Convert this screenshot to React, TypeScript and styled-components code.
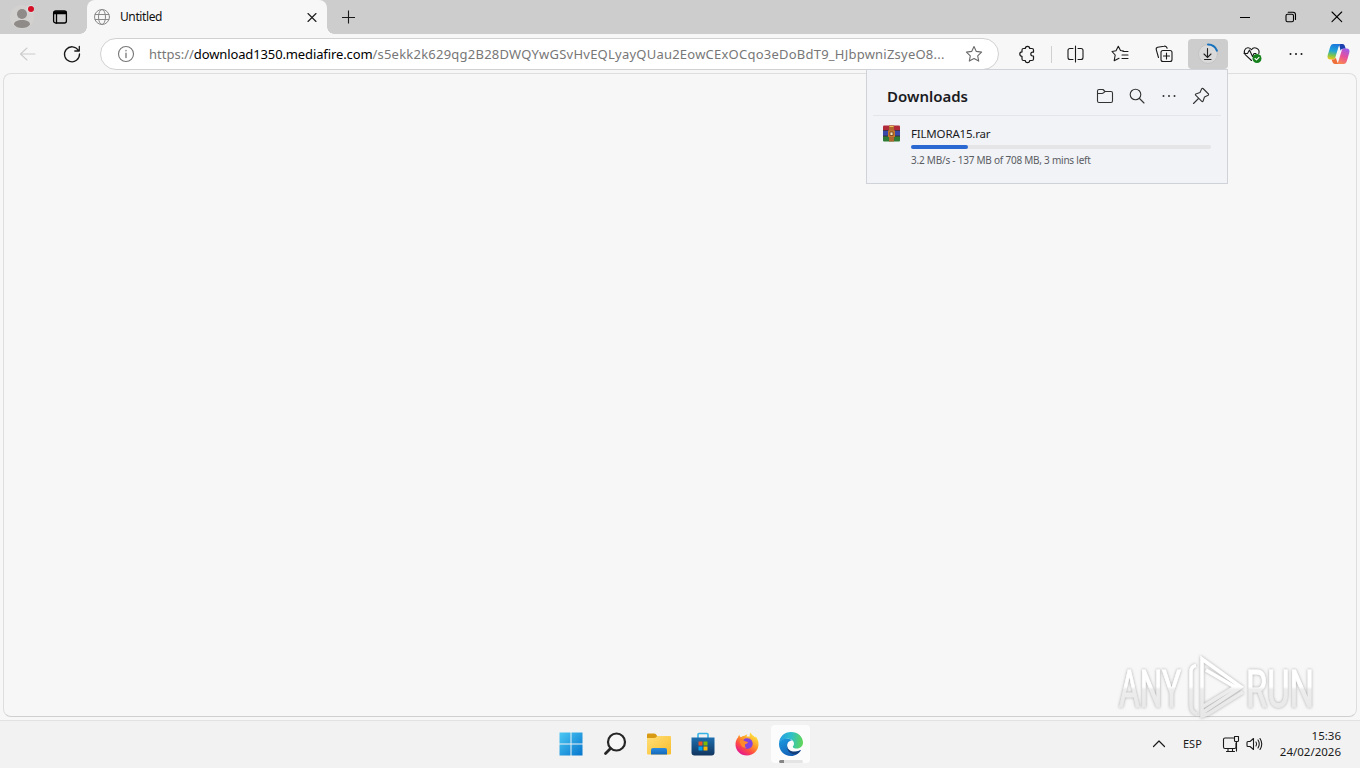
import React from 'react';
import styled, { createGlobalStyle } from 'styled-components';

const GlobalStyle = createGlobalStyle`
  * {
    box-sizing: border-box;
  }
  body {
    margin: 0;
    overflow: hidden;
    background: #f7f7f7;
    font-family: 'Noto Sans', 'Open Sans', sans-serif;
  }
  svg {
    display: block;
    flex: none;
  }
`

const Screen = styled.div`
  position: relative;
  display: flex;
  flex-direction: column;
  width: 1360px;
  height: 768px;
  overflow: hidden;
  background: #f7f7f7;
`

/* title bar */
const TitleBar = styled.div`
  display: flex;
  align-items: center;
  height: 34px;
  flex: none;
  background: #cdcdcd;
`
const TitleLeft = styled.div`
  display: flex;
  align-items: center;
  gap: 18px;
  width: 87px;
  padding-left: 10px;
`
const Tab = styled.div`
  position: relative;
  display: flex;
  align-items: center;
  width: 240px;
  height: 34px;
  padding: 0 8px 0 6px;
  background: #f7f7f7;
  border-radius: 8px 8px 0 0;

  &:before,
  &:after {
    content: '';
    position: absolute;
    bottom: 0;
    width: 7px;
    height: 7px;
  }
  &:before {
    left: -7px;
    background: radial-gradient(circle at 0 0, transparent 6.5px, #f7f7f7 7px);
  }
  &:after {
    right: -7px;
    background: radial-gradient(circle at 100% 0, transparent 6.5px, #f7f7f7 7px);
  }
`
const TabTitle = styled.div`
  flex: 1;
  margin-left: 9px;
  font-size: 12px;
  line-height: 16px;
  letter-spacing: -0.4px;
  color: #111;
`
const NewTab = styled.div`
  margin-left: 13px;
`
const WindowButtons = styled.div`
  display: flex;
  margin-left: auto;
`
const WindowButton = styled.button`
  display: flex;
  justify-content: center;
  align-items: center;
  width: 46px;
  height: 34px;
  padding: 0;
  border: none;
  background: transparent;
`

/* toolbar */
const Toolbar = styled.div`
  display: flex;
  align-items: center;
  height: 39px;
  flex: none;
  padding: 1px 2px 0 8px;
`
const ToolButton = styled.button<{ $active?: boolean }>`
  display: flex;
  justify-content: center;
  align-items: center;
  flex: none;
  width: 40px;
  height: 30px;
  margin-right: 4px;
  padding: 0;
  border: none;
  border-radius: 4px;
  background: ${({ $active }) => ($active ? '#cdcdcd' : 'transparent')};

  &:last-child {
    margin: 0 0 0 -2px;
  }
`
const AddressBar = styled.div`
  display: flex;
  align-items: center;
  width: 899px;
  height: 32px;
  margin: 0 8px 0 4px;
  padding: 0 15px 0 16px;
  border: 1px solid #d1d1d1;
  border-radius: 16px;
  background: #fff;
`
const Url = styled.div`
  display: flex;
  flex: 1;
  margin-left: 14px;
  font-size: 13px;
  line-height: 20px;
  white-space: nowrap;
  color: #777;
`
const Host = styled.span`
  color: #000;
  letter-spacing: -0.12px;
`
const Path = styled.span`
  letter-spacing: 0.23px;
`
const Separator = styled.div`
  width: 1px;
  height: 17px;
  margin-right: 4px;
  background: #d0d0d0;
`

/* page */
const PageFrame = styled.div`
  flex: none;
  height: 644px;
  margin: 0 3px 3px;
  border: 1px solid #dedede;
  border-bottom-color: #cfcfcf;
  border-radius: 8px;
  background: #f7f7f7;
`

/* downloads flyout */
const Flyout = styled.div`
  position: absolute;
  top: 69px;
  left: 866px;
  width: 362px;
  height: 115px;
  border: 1px solid #d0d2da;
  background: #f1f3f7;
`
const FlyoutHeader = styled.div`
  display: flex;
  align-items: center;
  height: 46px;
  margin: 0 6px;
  padding: 6px 10px 0 14px;
  border-bottom: 1px solid #e3e5ea;
`
const FlyoutTitle = styled.div`
  flex: 1;
  font-size: 15px;
  font-weight: 600;
  line-height: 20px;
  color: #1b1b1f;
`
const FlyoutActions = styled.div`
  display: flex;
  gap: 12px;
`
const DownloadItem = styled.div`
  display: flex;
  gap: 11px;
  padding: 9px 16px 0;
`
const DownloadBody = styled.div`
  flex: 1;
`
const FileName = styled.div`
  font-size: 11.5px;
  line-height: 18px;
  height: 20px;
  color: #1b1b1f;
  letter-spacing: -0.18px;
`
const ProgressTrack = styled.div`
  height: 4px;
  border-radius: 2px;
  background: #e5e5e8;
`
const ProgressFill = styled.div`
  height: 4px;
  border-radius: 2px;
  background: #2a69d2;
`
const DownloadStatus = styled.div`
  margin-top: 3px;
  font-size: 10px;
  line-height: 16px;
  letter-spacing: -0.23px;
  color: #5a5c62;
`

/* watermark */
const Watermark = styled.div`
  position: absolute;
  top: 654px;
  left: 1114px;
`

/* taskbar */
const Taskbar = styled.div`
  display: flex;
  align-items: center;
  flex: none;
  height: 48px;
  padding: 0 0 2px 549px;
  border-top: 1px solid #e2e2e2;
  background: #f2f2f2;
`
const TaskButton = styled.div<{ $active?: boolean }>`
  position: relative;
  display: flex;
  justify-content: center;
  align-items: center;
  width: 39px;
  height: 38px;
  margin: 0 3px 0 2px;
  border-radius: 4px;
  background: ${({ $active }) => ($active ? '#fcfcfc' : 'transparent')};
`
const Indicator = styled.div`
  position: absolute;
  left: 8px;
  bottom: 0;
  width: 24px;
  height: 3px;
  border-radius: 2px;
  background: linear-gradient(to right, #858585 5px, #e4e4e4 5px);
`
const Tray = styled.div`
  display: flex;
  align-items: center;
  margin-left: auto;
  padding-right: 19px;
`
const Language = styled.div`
  width: 20px;
  margin: 0 19px 0 17px;
  font-size: 11px;
  line-height: 16px;
  color: #1a1a1a;
`
const Volume = styled.div`
  margin: 0 -3px 0 3px;
`
const Clock = styled.div`
  width: 70px;
  margin-left: 7px;
  font-size: 11.5px;
  line-height: 16px;
  text-align: right;
  color: #1a1a1a;
  white-space: nowrap;
`

type IconProps = { size?: number; color?: string; stroke?: number; children: React.ReactNode };

const Icon: React.FC<IconProps> = ({ size = 20, color = '#1a1a1a', stroke = 1.1, children }) => (
  <svg width={size} height={size} viewBox={`0 0 ${size} ${size}`} fill="none" stroke={color} strokeWidth={stroke} strokeLinecap="round" strokeLinejoin="round">
    {children}
  </svg>
);

const ProfileIcon = () => (
  <svg width="24" height="24" viewBox="0 0 24 24">
    <circle cx="12" cy="12" r="12" fill="#d3d1cf" />
    <circle cx="12" cy="9" r="5" fill="#8f8b88" />
    <path d="M4 19.5c0-3 3.5-4.5 8-4.5s8 1.500 8 4.500c-1.500 2.500-4.500 3.500-8 3.500s-6.500-1-8-3.500z" fill="#8f8b88" />
    <circle cx="21" cy="4" r="4" fill="#dedcdc" />
    <circle cx="21" cy="4" r="3" fill="#d50f25" />
  </svg>
);

const StoreIcon = () => (
  <svg width="24" height="24" viewBox="0 0 24 24">
    <defs>
      <linearGradient id="store" x1="0" y1="0" x2="0" y2="1">
        <stop offset="0" stopColor="#1c6fb0" />
        <stop offset="1" stopColor="#12355f" />
      </linearGradient>
    </defs>
    <path d="M7 6V2.500q0-1 1-1h8q1 0 1 1V6" fill="none" stroke="#35b3e6" strokeWidth="1.600" />
    <path d="M.5 5.500h23v15q0 3-3 3h-17q-3 0-3-3z" fill="url(#store)" />
    <path d="M7.500 9.500h4v4h-4z" fill="#f25022" />
    <path d="M12.500 9.500h4v4h-4z" fill="#7fba00" />
    <path d="M7.500 14.500h4v4h-4z" fill="#00a4ef" />
    <path d="M12.500 14.500h4v4h-4z" fill="#ffb900" />
  </svg>
);

const ExplorerIcon = () => (
  <svg width="26" height="24" viewBox="0 0 26 24">
    <defs>
      <linearGradient id="folder" x1="0" y1="0" x2="1" y2="1">
        <stop offset="0" stopColor="#ffdf78" />
        <stop offset="1" stopColor="#f8bd2c" />
      </linearGradient>
      <linearGradient id="folderBase" x1="0" y1="0" x2="0" y2="1">
        <stop offset="0" stopColor="#2a8be0" />
        <stop offset="1" stopColor="#1568b8" />
      </linearGradient>
    </defs>
    <path d="M1 7V2.500q0-1 1-1h6.500q.7 0 1.200.6L12 5v3z" fill="#d99a13" />
    <path d="M1 6h8l2.500-2H24q1 0 1 1v16.500q0 1-1 1H2q-1 0-1-1z" fill="url(#folder)" />
    <path d="M5 22.500V18q0-2 2-2h12q2 0 2 2v4.500z" fill="url(#folderBase)" />
  </svg>
);

const FirefoxIcon = () => (
  <svg width="24" height="24" viewBox="0 0 24 24">
    <defs>
      <linearGradient id="fox" x1=".85" y1=".1" x2=".25" y2=".95">
        <stop offset="0" stopColor="#ffe642" />
        <stop offset=".4" stopColor="#ff9a26" />
        <stop offset=".7" stopColor="#ff4a45" />
        <stop offset="1" stopColor="#e3188e" />
      </linearGradient>
    </defs>
    <path d="M3 5.500c.2-1.200.7-2 1.300-2.500.2 1 .7 1.700 1.500 2.200C7 4.300 8 4 9 4c1-.9 2.500-1.500 3.500-1.500-.7.700-1 1.300-1 2h3.300C14.500 3 14.700 1.500 15.700.6c.6 2.200 3 3.400 4.500 4.900.3 0 .4-.5.300-1.200 2 2 3 5 3 8C23.500 18.700 18.500 23.500 12 23.500S.5 18.700.5 12.500c0-3 1-5.500 2.500-7z" fill="url(#fox)" />
    <path d="M8 8.500c1-2 3-2.500 4.500-2.300 3.500.3 5.200 2.800 5.200 5.600 0 2.800-2.300 5-5.200 5s-5-2-5-4.500z" fill="#8243e0" />
    <path d="M4.500 8.500c2-1 4-.8 5.500.7l3 .8c0 1.300-1.500 1.600-3 2.400-.3 1.800.5 2.800 1.500 3.200-2.500.8-6-.8-7-7.100z" fill="#ff8a2c" />
  </svg>
);

const EdgeIcon = () => (
  <svg width="24" height="24" viewBox="0 0 24 24">
    <defs>
      <linearGradient id="edgeTop" x1="0" y1=".4" x2="1" y2=".5">
        <stop offset="0" stopColor="#269de4" />
        <stop offset=".5" stopColor="#2fc1c8" />
        <stop offset="1" stopColor="#61d655" />
      </linearGradient>
      <linearGradient id="edgeSide" x1="0" y1="0" x2=".7" y2="1">
        <stop offset="0" stopColor="#1c9de2" />
        <stop offset="1" stopColor="#1258b0" />
      </linearGradient>
    </defs>
    <path d="M0 11C.5 4.500 5.500 0 12 0c7 0 12 4.800 12 10.500 0 3.500-2.700 6-6.200 6-2.500 0-4-.8-4-1.800 0-.7 1.200-1.300 1.200-3C15 9 12.500 6.800 8.500 6.800 4.500 6.800 1.200 8.500 0 11z" fill="url(#edgeTop)" />
    <path d="M0 12c0-3.200 3.500-5.300 8.500-5.200 2 .1 3.500.7 4.500 1.700-3 0-4.800 2.300-4.800 5.200 0 5.300 5.500 8 11 5.300l2.800-1C20 21.600 16.500 24 12 24 5 24 0 18.500 0 12z" fill="url(#edgeSide)" />
    <path d="M8.200 13.700C7.500 19.500 12.500 23 17.500 22.200c2-1 3.500-2.500 4.500-4.200-6.500 3-13.500 1.500-13.800-4.300z" fill="#123f7c" />
  </svg>
);

const CopilotIcon = () => (
  <svg width="23" height="22" viewBox="0 0 23 22">
    <defs>
      <linearGradient id="copLeft" x1=".5" y1="0" x2=".35" y2="1">
        <stop offset="0" stopColor="#1a78dc" />
        <stop offset=".45" stopColor="#20a6d8" />
        <stop offset=".75" stopColor="#7fc64c" />
        <stop offset="1" stopColor="#f0c51d" />
      </linearGradient>
      <linearGradient id="copRight" x1=".7" y1="0" x2=".3" y2="1">
        <stop offset="0" stopColor="#a05be8" />
        <stop offset=".5" stopColor="#e8509a" />
        <stop offset="1" stopColor="#fb8a4c" />
      </linearGradient>
    </defs>
    <path d="M12 1h3.500c1.500 0 2 1 2.500 2.500l.7 2.300H16c-1.300 0-2 .7-2.400 2z" fill="#1b3fae" />
    <path d="M6.500 1H14c-1.500.3-2 1.500-2.500 3L8.300 14.500C7.800 16 7 16.500 5.500 16.500H3.300C1 16.500 0 14.700.7 12.200L3 4.500C3.700 2 4.700 1 6.500 1z" fill="url(#copLeft)" />
    <path d="M16.500 21H9c1.500-.3 2-1.500 2.500-3l3.200-10.500c.5-1.500 1.300-2 2.800-2h2.200c2.300 0 3.300 1.800 2.600 4.300L20 17.500c-.7 2.500-1.700 3.500-3.500 3.500z" fill="url(#copRight)" />
    <path d="M11 21H8c-1.500 0-2.200-1-2.700-2.500l-.7-2h1.700c1.300 0 2-.7 2.400-2z" fill="#ef6f3a" />
  </svg>
);

const RarIcon = () => (
  <svg width="17" height="17" viewBox="0 0 17 17">
    <path d="M0 1.500Q0 .5 1 .5h15q1 0 1 1v4H0z" fill="#b02a3a" />
    <path d="M0 5.500h17v5.500H0z" fill="#3a48a8" />
    <path d="M0 11h17v4.500q0 1-1 1H1q-1 0-1-1z" fill="#2f7a35" />
    <path d="M0 5.500h17M0 11h17" stroke="#352733" strokeWidth=".8" />
    <path d="M6 .5h5v16H6z" fill="#b0672f" />
    <path d="M5 5.500h7v6.500H5z" fill="#c9762d" />
    <path d="M7 7h3v3.500H7z" fill="#f4e4b8" stroke="#6b3a1a" strokeWidth=".8" />
    <path d="M6.500 1.500h4" stroke="#f0c05a" />
  </svg>
);

const WatermarkArt = () => (
  <svg width="220" height="72" viewBox="0 0 220 72" fill="none" overflow="visible">
    <defs>
      <linearGradient id="mark" x1="0" y1="0" x2="0" y2="68" gradientUnits="userSpaceOnUse">
        <stop offset="0" stopColor="#ffffff" />
        <stop offset=".48" stopColor="#ffffff" />
        <stop offset=".52" stopColor="#ededed" />
        <stop offset="1" stopColor="#e6e6e6" />
      </linearGradient>
      <filter id="shade" x="-10%" y="-10%" width="120%" height="120%">
        <feDropShadow dx="0" dy="0" stdDeviation="1.600" floodColor="#8c8c8c" floodOpacity=".75" />
      </filter>
    </defs>
    <g filter="url(#shade)">
      <g fill="url(#mark)" stroke="url(#mark)" strokeWidth=".9" fontFamily="Roboto, sans-serif" fontSize="51">
        <text x="5" y="53" textLength="62" lengthAdjust="spacingAndGlyphs">ANY</text>
        <text x="132" y="53" textLength="68" lengthAdjust="spacingAndGlyphs">RUN</text>
      </g>
      <path d="M82 11.500q-5 1-5 6v34q0 7 6 8.500" stroke="url(#mark)" strokeWidth="3.500" />
      <path d="M88 5v54l39-26zM88 5v57l6-2 35-22M92 16l29 17-33 20" stroke="url(#mark)" strokeWidth="3.500" />
    </g>
  </svg>
);

const App: React.FC = () => {
  const downloaded = 137;
  const total = 708;

  return (
    <Screen>
      <GlobalStyle />
      <TitleBar>
        <TitleLeft>
          <ProfileIcon />
          <Icon size={16} stroke={1.3} color="#000">
            <rect x="1.600" y="2" width="12.800" height="12" rx="2" />
            <path d="M2 3h12v1.500H2z" fill="#000" />
            <path d="M4.500 5v9" />
          </Icon>
        </TitleLeft>
        <Tab>
          <Icon size={18} stroke={1} color="#8a8a8a">
            <circle cx="9" cy="9" r="7.500" />
            <ellipse cx="9" cy="9" rx="3.500" ry="7.500" />
            <path d="M2.200 6.500h13.600M2.200 11.500h13.600" />
          </Icon>
          <TabTitle>Untitled</TabTitle>
          <Icon size={14}>
            <path d="M3 3.500l8 8M11 3.500l-8 8" />
          </Icon>
        </Tab>
        <NewTab>
          <Icon size={16} stroke={1.1}>
            <path d="M8.500 1.500v13M2 8.500h13" strokeLinecap="butt" />
          </Icon>
        </NewTab>
        <WindowButtons>
          <WindowButton>
            <Icon size={12} stroke={1} color="#000"><path d="M1 6.500h10" strokeLinecap="butt" /></Icon>
          </WindowButton>
          <WindowButton>
            <Icon size={12} stroke={1.1} color="#000">
              <rect x="1" y="3.200" width="7.500" height="7.500" rx="1.500" />
              <path d="M3.200 1.200H8q2.500 0 2.500 2.500v4.800" />
            </Icon>
          </WindowButton>
          <WindowButton>
            <Icon size={12} stroke={1.1} color="#000"><path d="M1 1l9.700 9.700M10.700 1L1 10.700" /></Icon>
          </WindowButton>
        </WindowButtons>
      </TitleBar>

      <Toolbar>
        <ToolButton>
          <Icon color="#cccccc"><path d="M17 10H3M9 4l-6.500 6L9 16" /></Icon>
        </ToolButton>
        <ToolButton>
          <Icon stroke={1.3}><path d="M16.500 6.500A7.500 7.500 0 1 0 17.500 10M17.300 2.500v4.500h-4.500" /></Icon>
        </ToolButton>
        <AddressBar>
          <Icon size={18} color="#767676" stroke={1.1}>
            <circle cx="9" cy="9" r="7.500" />
            <path d="M9 8.200v4.300M9 5.500v.3" strokeWidth="1.300" />
          </Icon>
          <Url>
            <span>https://</span>
            <Host>download1350.mediafire.com</Host>
            <Path>/s5ekk2k629qg2B28DWQYwGSvHvEQLyayQUau2EowCExOCqo3eDoBdT9_HJbpwniZsyeO8...</Path>
          </Url>
          <Icon size={18} color="#6a6a6a">
            <path d="M9 1.500l2.300 4.900 5.300.7-3.900 3.700 1 5.300L9 13.500l-4.700 2.600 1-5.300-3.900-3.700 5.300-.7z" />
          </Icon>
        </AddressBar>
        <ToolButton>
          <Icon stroke={1.2}>
            <path d="M6.500 4.500h1.800a2.200 2.200 0 0 1 4.400 0H15q1.500 0 1.500 1.500v2.200h-.8a1.900 1.900 0 0 0 0 3.800h.8v3q0 1.500-1.500 1.500h-2.300a2.200 2.200 0 0 1-4.400 0H6.500Q5 16.500 5 15v-2.700a2.200 2.200 0 0 1 0-4.400V6q0-1.500 1.500-1.500z" />
          </Icon>
        </ToolButton>
        <Separator />
        <ToolButton>
          <Icon>
            <path d="M9.500 2v16" />
            <path d="M7 4.500H4Q2 4.500 2 6.500v7q0 2 2 2h3M12 4.500h3q2 0 2 2v7q0 2-2 2h-3" />
          </Icon>
        </ToolButton>
        <ToolButton>
          <Icon>
            <path d="M13.500 7l-3-.5L8.300 2.300 6 6.800l-4 .7L5.200 11l-1 5.700 4.800-2.500M13 7.500h5M12 11h6M12 14.500h6" />
          </Icon>
        </ToolButton>
        <ToolButton>
          <Icon>
            <rect x="7" y="6.500" width="11" height="11" rx="2" />
            <path d="M12.500 9v6M9.500 12h6M4.500 13.500L2.300 5.800q-.5-2 1.300-2.500L10 2.200q2-.4 2.800 1.300l.3.700" />
          </Icon>
        </ToolButton>
        <ToolButton $active>
          <svg width="22" height="22" viewBox="0 0 22 22" fill="none" strokeLinecap="round">
            <circle cx="11" cy="11" r="9.500" fill="#dadada" stroke="#c4c4c4" />
            <path d="M11 1.500a9.500 9.500 0 0 1 8.900 6.200" stroke="#1672bd" strokeWidth="2" />
            <path d="M10.500 5.500v8.500M7 11l3.500 3.500L14 11M7.500 16.500h6.500" stroke="#222" strokeWidth="1.100" />
          </svg>
        </ToolButton>
        <ToolButton>
          <Icon>
            <path d="M9.500 16.500L3.500 10.800C.8 8 3 3.500 6.200 3.800 8 4 9 5 9.500 5.700c1-1.500 3-2.300 5-1.500 2.200 1 3 3.200 2.300 5.300M2 9.500h3.500L7.500 6l3 6.500L12 9.500h2" />
            <circle cx="15" cy="14.500" r="4.500" fill="#16801d" stroke="none" />
            <path d="M13 14.500l1.500 1.300 2.500-2.500" stroke="#fff" />
          </Icon>
        </ToolButton>
        <ToolButton>
          <Icon stroke={2}><path d="M4.500 10h.01M10 10h.01M15.500 10h.01" /></Icon>
        </ToolButton>
        <ToolButton>
          <CopilotIcon />
        </ToolButton>
      </Toolbar>

      <PageFrame />

      <Taskbar>
        <TaskButton>
          <svg width="24" height="24" viewBox="0 0 24 24">
            <defs>
              <linearGradient id="win" x1="0" y1="0" x2="24" y2="24" gradientUnits="userSpaceOnUse">
                <stop offset="0" stopColor="#4ecbf5" />
                <stop offset="1" stopColor="#0573cc" />
              </linearGradient>
            </defs>
            <path d="M.5.500h11v11H.5zM12.500.500h11v11h-11zM.5 12.500h11v11H.5zM12.500 12.500h11v11h-11z" fill="url(#win)" />
          </svg>
        </TaskButton>
        <TaskButton>
          <Icon size={24} stroke={2.2} color="#262626">
            <circle cx="13.500" cy="10" r="8.500" fill="#f7f7f7" />
            <path d="M7.500 16.500L2.500 21.500" strokeWidth="2.800" />
          </Icon>
        </TaskButton>
        <TaskButton><ExplorerIcon /></TaskButton>
        <TaskButton><StoreIcon /></TaskButton>
        <TaskButton><FirefoxIcon /></TaskButton>
        <TaskButton $active>
          <EdgeIcon />
          <Indicator />
        </TaskButton>
        <Tray>
          <Icon size={14} stroke={1.2}><path d="M1.500 9.500L7 4l5.500 5.500" /></Icon>
          <Language>ESP</Language>
          <Icon size={18} stroke={1.1}>
            <path d="M11.500 3H3Q1.500 3 1.500 4.500v7.500Q1.500 13.500 3 13.500h9.500q1.500 0 1.500-1.500V8M6 13.500v3M10.500 13.500v3M4.500 16.500h8" />
            <path d="M12.500 1.500h4v4q0 1-1 1h-2q-1 0-1-1zM14.500 6.500v9.500" />
          </Icon>
          <Volume>
            <Icon size={24} stroke={1.1}>
              <path d="M5 9.500h2l3.500-3v11l-3.500-3H5q-1 0-1-1v-3q0-1 1-1zM13 10q1.300 2 0 4M15 8q2.500 4 0 8M17 6.500q3.500 5.500 0 11" />
            </Icon>
          </Volume>
          <Clock>
            15:36
            <br />
            24/02/2026
          </Clock>
        </Tray>
      </Taskbar>

      <Flyout>
        <FlyoutHeader>
          <FlyoutTitle>Downloads</FlyoutTitle>
          <FlyoutActions>
            <Icon color="#333">
              <path d="M2.500 5q0-1.500 1.500-1.500h4l2 2h6q1.500 0 1.500 1.500v8q0 1.500-1.500 1.500H4q-1.500 0-1.500-1.500zM2.500 7.500h4.500q1 0 1.500-.7L10 5.500" />
            </Icon>
            <Icon color="#333">
              <circle cx="8.500" cy="8.500" r="5.300" />
              <path d="M12.500 12.500l4.500 4.500" />
            </Icon>
            <Icon color="#333" stroke={2}><path d="M4.500 10h.01M10 10h.01M15.500 10h.01" /></Icon>
            <Icon color="#333">
              <path d="M12 2.500l5.500 5.500q.4.800-.3 1.300L13.500 11l-1.500 4.200q-.5.800-1.200.2L4.600 9.200q-.6-.7.200-1.200L9 6.500l1.700-3.700q.5-.8 1.300-.3zM7.500 12.500L2.500 17.500" />
            </Icon>
          </FlyoutActions>
        </FlyoutHeader>
        <DownloadItem>
          <RarIcon />
          <DownloadBody>
            <FileName>FILMORA15.rar</FileName>
            <ProgressTrack>
              <ProgressFill style={{ width: `${(downloaded / total) * 98}%` }} />
            </ProgressTrack>
            <DownloadStatus>3.2 MB/s - 137 MB of 708 MB, 3 mins left</DownloadStatus>
          </DownloadBody>
        </DownloadItem>
      </Flyout>

      <Watermark>
        <WatermarkArt />
      </Watermark>
    </Screen>
  );
};

export default App;
